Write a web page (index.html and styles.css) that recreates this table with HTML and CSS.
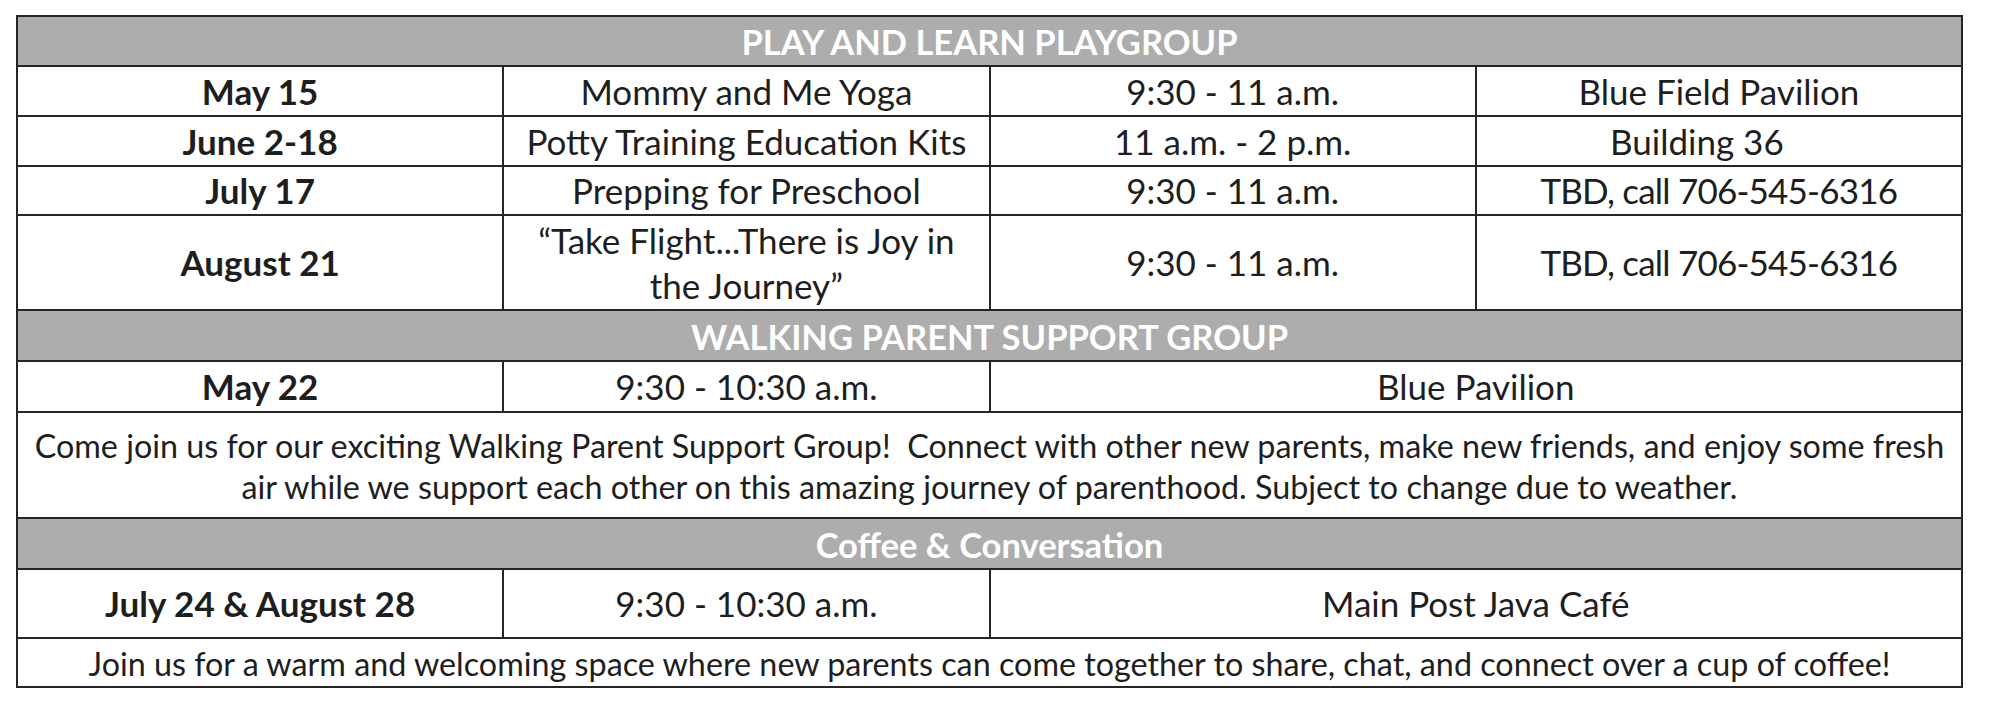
FILE: index.html
```html
<!DOCTYPE html>
<html lang="en">
<head>
<meta charset="utf-8">
<title>Parent Programs Schedule</title>
<link rel="stylesheet" href="styles.css">
</head>
<body>
<div class="sched">
  <div class="hdr">PLAY AND LEARN PLAYGROUP</div>

  <div class="cell date">May 15</div>
  <div class="cell">Mommy and Me Yoga</div>
  <div class="cell">9:30 - 11 a.m.</div>
  <div class="cell">Blue Field Pavilion</div>

  <div class="cell date">June 2-18</div>
  <div class="cell">Potty Training Education Kits</div>
  <div class="cell">11 a.m. - 2 p.m.</div>
  <div class="cell shift">Building 36</div>

  <div class="cell date">July 17</div>
  <div class="cell">Prepping for Preschool</div>
  <div class="cell">9:30 - 11 a.m.</div>
  <div class="cell tight">TBD, call 706-545-6316</div>

  <div class="cell date">August 21</div>
  <div class="cell two">“Take Flight...There is Joy in<br>the Journey”</div>
  <div class="cell">9:30 - 11 a.m.</div>
  <div class="cell tight">TBD, call 706-545-6316</div>

  <div class="hdr">WALKING PARENT SUPPORT GROUP</div>

  <div class="cell date">May 22</div>
  <div class="cell">9:30 - 10:30 a.m.</div>
  <div class="cell span2">Blue Pavilion</div>

  <div class="cell desc">Come join us for our exciting Walking Parent Support Group!&nbsp; Connect with other new parents, make new friends, and enjoy some fresh<br>air while we support each other on this amazing journey of parenthood. Subject to change due to weather.</div>

  <div class="hdr">Coffee &amp; Conversation</div>

  <div class="cell date">July 24 &amp; August 28</div>
  <div class="cell">9:30 - 10:30 a.m.</div>
  <div class="cell span2">Main Post Java Café</div>

  <div class="cell desc">Join us for a warm and welcoming space where new parents can come together to share, chat, and connect over a cup of coffee!</div>
</div>
</body>
</html>
```

FILE: styles.css
```css
html, body {
  margin: 0;
  padding: 0;
  background: #ffffff;
}

body {
  font-family: Lato, "Open Sans", "Liberation Sans", sans-serif;
  color: #1e1e1e;
}

.sched {
  box-sizing: border-box;
  width: 1947px;
  margin: 15px 0 0 16px;
  padding: 2px;
  background: #262626;
  display: grid;
  grid-template-columns: repeat(4, 1fr);
  grid-template-rows: 48px 48px 48px 47px 93px 49px 49px 104px 49px 67px 47px;
  gap: 2px;
}

.hdr {
  grid-column: 1 / -1;
  background: #adadad;
  color: #ffffff;
  font-weight: 700;
  font-size: 34.5px;
  display: flex;
  align-items: center;
  justify-content: center;
  padding-top: 1px;
}

.cell {
  background: #ffffff;
  display: flex;
  align-items: center;
  justify-content: center;
  text-align: center;
  font-size: 35px;
  line-height: 1.3;
  padding-top: 1px;
}

.date {
  font-weight: 700;
}

.two {
  line-height: 45px;
}

.shift {
  padding-right: 44px;
}

.tight {
  letter-spacing: -0.8px;
}

.span2 {
  grid-column: span 2;
}

.desc {
  grid-column: 1 / -1;
  font-size: 32.3px;
  line-height: 41px;
}
```
